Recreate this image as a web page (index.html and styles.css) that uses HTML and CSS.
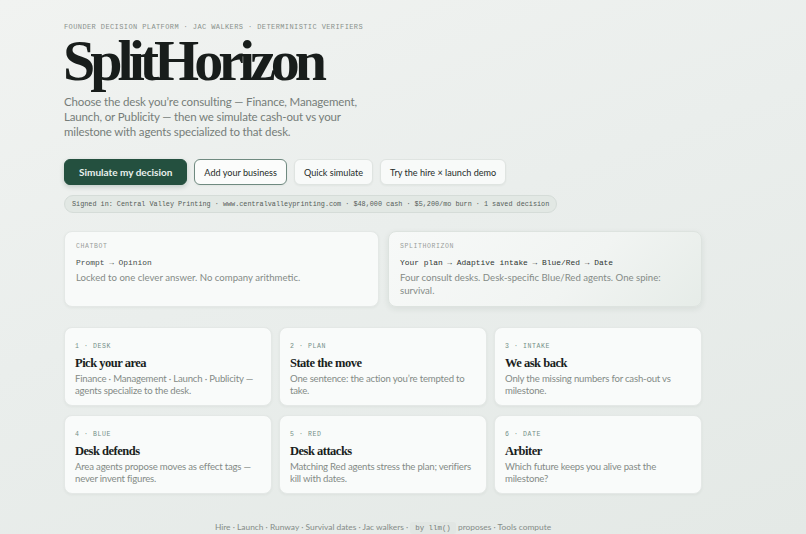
FILE: index.html
```html
<!DOCTYPE html>
<html lang="en">
<head>
<meta charset="utf-8">
<title>SplitHorizon</title>
<link rel="stylesheet" href="styles.css">
</head>
<body>
<main class="page">
  <header class="hero">
    <p class="eyebrow">Founder decision platform · Jac walkers · Deterministic verifiers</p>
    <h1 class="title">SplitHorizon</h1>
    <p class="lede">Choose the desk you’re consulting — Finance, Management, Launch, or Publicity — then we simulate cash-out vs your milestone with agents specialized to that desk.</p>
    <div class="actions">
      <button class="btn btn-primary">Simulate my decision</button>
      <button class="btn btn-outline">Add your business</button>
      <button class="btn">Quick simulate</button>
      <button class="btn">Try the hire × launch demo</button>
    </div>
    <div class="session">Signed in: Central Valley Printing · www.centralvalleyprinting.com · $48,000 cash · $5,200/mo burn · 1 saved decision</div>
  </header>

  <section class="compare">
    <article class="card compare-card">
      <p class="tag">Chatbot</p>
      <p class="flow">Prompt → Opinion</p>
      <p class="desc">Locked to one clever answer. No company arithmetic.</p>
    </article>
    <article class="card compare-card compare-card-ours">
      <p class="tag">SplitHorizon</p>
      <p class="flow flow-strong">Your plan → Adaptive intake → Blue/Red → Date</p>
      <p class="desc">Four consult desks. Desk-specific Blue/Red agents. One spine: survival.</p>
    </article>
  </section>

  <section class="steps">
    <article class="card step">
      <p class="step-no">1 · Desk</p>
      <h2 class="step-title">Pick your area</h2>
      <p class="desc">Finance · Management · Launch · Publicity — agents specialize to the desk.</p>
    </article>
    <article class="card step">
      <p class="step-no">2 · Plan</p>
      <h2 class="step-title">State the move</h2>
      <p class="desc">One sentence: the action you’re tempted to take.</p>
    </article>
    <article class="card step">
      <p class="step-no">3 · Intake</p>
      <h2 class="step-title">We ask back</h2>
      <p class="desc">Only the missing numbers for cash-out vs milestone.</p>
    </article>
    <article class="card step">
      <p class="step-no">4 · Blue</p>
      <h2 class="step-title">Desk defends</h2>
      <p class="desc">Area agents propose moves as effect tags — never invent figures.</p>
    </article>
    <article class="card step">
      <p class="step-no">5 · Red</p>
      <h2 class="step-title">Desk attacks</h2>
      <p class="desc">Matching Red agents stress the plan; verifiers kill with dates.</p>
    </article>
    <article class="card step">
      <p class="step-no">6 · Date</p>
      <h2 class="step-title">Arbiter</h2>
      <p class="desc">Which future keeps you alive past the milestone?</p>
    </article>
  </section>

  <footer class="foot">Hire · Launch · Runway · Survival dates · Jac walkers · <code class="chip">by llm()</code> proposes · Tools compute</footer>
</main>
</body>
</html>
```

FILE: styles.css
```css
* { box-sizing: border-box; }

html, body {
  margin: 0;
  height: 100%;
}

body {
  background: linear-gradient(160deg, #f1f3f1 0%, #eaeeec 45%, #e4e9e6 100%);
  font-family: Lato, "Noto Sans", sans-serif;
  color: #1c221f;
  overflow: hidden;
}

p, h1, h2 { margin: 0; }

.page {
  width: 638px;
  margin-left: 64px;
  padding-top: 23px;
}

.eyebrow {
  font-family: "Liberation Mono", "DejaVu Sans Mono", monospace;
  font-size: 7px;
  letter-spacing: 0.4px;
  text-transform: uppercase;
  color: #8a918d;
  line-height: 9px;
}

.title {
  font-family: "Liberation Serif", "DejaVu Serif", serif;
  font-weight: 700;
  font-size: 58px;
  letter-spacing: -5px;
  line-height: 58px;
  margin-left: -1px;
  color: #181d1b;
}

.lede {
  margin-top: 4px;
  width: 312px;
  font-size: 11.5px;
  letter-spacing: -0.15px;
  line-height: 15px;
  color: #767d79;
}

.actions {
  display: flex;
  gap: 7px;
  margin-top: 20px;
}

.btn {
  height: 26px;
  padding: 0 9px;
  border-radius: 6px;
  border: 1px solid #dfe4e1;
  background: #f8faf9;
  font-family: Lato, "Noto Sans", sans-serif;
  font-size: 9.1px;
  font-weight: 400;
  color: #262c29;
  box-shadow: 0 1px 2px rgba(30, 50, 40, 0.05);
}

.btn-primary {
  background: #24503f;
  border-color: #24503f;
  color: #e9f1ed;
  font-size: 10px;
  font-weight: 700;
  padding: 0 14px;
  box-shadow: 0 2px 5px rgba(20, 60, 45, 0.2);
}

.btn-outline {
  border-color: #6f8a80;
  background: #fbfcfb;
}

.session {
  display: inline-block;
  margin-top: 10px;
  height: 18px;
  line-height: 16px;
  padding: 0 7px;
  border-radius: 9px;
  border: 1px solid #d5dcd8;
  background: #e2e8e4;
  font-family: "Liberation Mono", "DejaVu Sans Mono", monospace;
  font-size: 6.8px;
  color: #555d59;
  white-space: nowrap;
}

.card {
  background: #f8faf9;
  border: 1px solid #e4e8e6;
  border-radius: 8px;
  box-shadow: 0 1px 3px rgba(30, 50, 40, 0.05);
}

.compare {
  display: grid;
  grid-template-columns: 315px 314px;
  gap: 9px;
  margin-top: 18px;
}

.compare-card {
  height: 76px;
  padding: 10px 11px;
}

.compare-card-ours {
  background: linear-gradient(135deg, #f7f9f8 0%, #f1f4f2 60%, #e6ece8 100%);
  border-color: #dde3df;
  box-shadow: 0 2px 6px rgba(30, 50, 40, 0.08);
}

.tag {
  font-family: "Liberation Mono", "DejaVu Sans Mono", monospace;
  font-size: 6.5px;
  letter-spacing: 0.6px;
  text-transform: uppercase;
  color: #9aa09c;
  line-height: 9px;
}

.flow {
  margin-top: 6px;
  font-family: "Liberation Mono", "DejaVu Sans Mono", monospace;
  font-size: 7.9px;
  line-height: 11px;
  color: #464d49;
}

.flow-strong { color: #2f3532; }

.desc {
  margin-top: 3px;
  font-size: 9.6px;
  line-height: 13px;
  color: #848b87;
}

.steps {
  display: grid;
  grid-template-columns: repeat(3, 1fr);
  gap: 9px 7px;
  margin-top: 20px;
}

.step {
  height: 79px;
  padding: 14px 10px;
  background: #f9fbfa;
}

.step-no {
  font-family: "Liberation Mono", "DejaVu Sans Mono", monospace;
  font-size: 6.5px;
  letter-spacing: 0.6px;
  text-transform: uppercase;
  color: #759088;
  line-height: 9px;
}

.step-title {
  margin-top: 5px;
  font-family: "Liberation Serif", "DejaVu Serif", serif;
  font-weight: 700;
  font-size: 12.5px;
  letter-spacing: -0.5px;
  line-height: 15px;
  color: #1a1f1d;
}

.step .desc {
  margin-top: 2px;
  line-height: 12px;
  letter-spacing: -0.2px;
}

.foot {
  margin-top: 27px;
  text-align: center;
  font-size: 8.4px;
  color: #858c88;
  line-height: 12px;
}

.chip {
  display: inline-block;
  font-family: "Liberation Mono", "DejaVu Sans Mono", monospace;
  font-size: 7.4px;
  padding: 0 5px;
  border-radius: 3px;
  background: #e1e6e3;
  color: #767d79;
}
```
